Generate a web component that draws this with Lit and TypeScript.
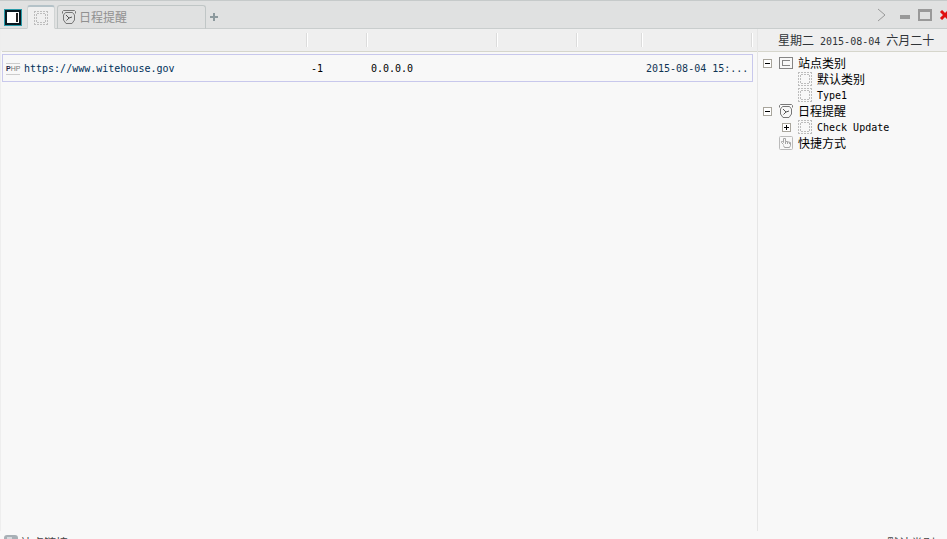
import { LitElement, html, css, svg } from "lit";
import { customElement } from "lit/decorators.js";

const siteIcon = html`<svg class="icon" width="16" height="16" viewBox="0 0 16 16" shape-rendering="crispEdges" fill="none" stroke="#bdbdbd" aria-hidden="true">
  <path d="M1 1.5h14M1 14.5h14M1.5 1v14M14.5 1v14" stroke-dasharray="2 1"/>
  <path d="M4 3.5h8M4 12.5h8M3.5 4v8M12.5 4v8" stroke-dasharray="2 1"/>
</svg>`;

const clockIcon = html`<svg class="icon" width="16" height="16" viewBox="0 0 16 16" fill="none" stroke="#777" aria-hidden="true">
  <path d="M1.5 4.5V2.5L2.5 1.5H13.5L14.5 2.5V4.5M4.5 3.5H11.5L13.5 6V11L11 14.5H5L2.5 11V6Z"/>
  <path d="M5 6L8 9L11 8M8 9L5.5 11.5" stroke="#555"/>
</svg>`;

const categoryIcon = html`<svg class="icon" width="16" height="16" viewBox="0 0 16 16" shape-rendering="crispEdges" fill="none" stroke="#858585" aria-hidden="true">
  <path d="M1.5 2.5h13v11h-13zM12 5.5H4.5v5H12"/>
</svg>`;

const handIcon = html`<svg class="icon" width="16" height="16" viewBox="0 0 16 16" fill="none" stroke="#bbb" aria-hidden="true">
  <rect x="1.5" y="1.5" width="13" height="13" rx="1"/>
  <path d="M5.5 9.5L3.5 7.5V6.5H4.5L5.5 7.5V3.5H7.5V6.5H9.5V7H11.5V7.5H12.5V10.5L11.5 12.5H6.5L5.5 10.5M7.5 6.5V9M9.5 7V9M11.5 7.5V9" stroke="#a5a5a5"/>
</svg>`;

const expander = (open: boolean, label: string) => html`<button class="expander" aria-label=${label} aria-expanded=${open}>
  <svg width="9" height="9" viewBox="0 0 9 9" shape-rendering="crispEdges" fill="none">
    <path d="M.5 .5h8v8h-8z" fill="#fff" stroke="#a8a59c"/>
    <path d="M2 4.5h5" stroke="#000"/>
    ${open ? "" : svg`<path d="M4.5 2v5" stroke="#000"/>`}
  </svg>
</button>`;

@customElement("app-root")
export class AppRoot extends LitElement {
  static styles = css`
    :host {
      display: flex;
      flex-direction: column;
      height: 100vh;
      overflow: hidden;
      background: #f8f8f8;
      color: #000;
      font: 12px/16px "Noto Sans CJK SC", sans-serif;
    }
    * { box-sizing: border-box; }
    button {
      margin: 0;
      padding: 0;
      border: 0;
      background: none;
      color: inherit;
      font: inherit;
    }
    svg { display: block; }
    .icon { flex: none; }
    .latin { font-family: "DejaVu Sans Mono", monospace; font-size: 10px; }
    .titlebar {
      display: flex;
      flex: none;
      align-items: flex-end;
      height: 29px;
      border-top: 1px solid #c6caca;
      background: linear-gradient(#c9cdcd, #c9cdcd) bottom / 100% 1px no-repeat #e0e1e1;
    }
    .logo { margin: 0 5px 3px 4px; }
    .tab {
      display: flex;
      align-items: center;
      height: 24px;
      border: 1px solid #c0c6c6;
      border-bottom-color: #c9cdcd;
      border-radius: 3px 3px 0 0;
      color: #909090;
    }
    .tab.current {
      width: 28px;
      justify-content: center;
      margin-right: 2px;
      border-color: #b4c2c8 #d0d4d4 #efefef;
      border-top-width: 2px;
      background: #efefef;
    }
    .tab.wide {
      gap: 2px;
      width: 149px;
      padding-left: 3px;
    }
    .add { margin: 0 0 7px 4px; }
    .controls {
      display: flex;
      gap: 7px;
      height: 28px;
      align-items: center;
      margin-left: auto;
    }
    .controls button:first-child { margin-right: 6px; }
    .body { display: flex; flex: 1; min-height: 0; }
    .main {
      flex: 1;
      min-width: 0;
      padding-left: 1px;
      border-left: 1px solid #eee;
      background: linear-gradient(#efefef, #efefef) top / 100% 22px no-repeat;
    }
    .sites { width: 100%; border-collapse: separate; border-spacing: 0; table-layout: fixed; }
    .sites th {
      height: 23px;
      padding: 0;
      border-bottom: 1px solid #d6d6cc;
      background: linear-gradient(#dcdcdc, #dcdcdc) right 1px center / 1px 14px no-repeat,
        linear-gradient(#fff, #fff) right center / 1px 14px no-repeat, #efefef;
    }
    .sites th.end { background: #efefef; }
    .address { width: 306px; }
    .rank { width: 60px; }
    .ip { width: 130px; }
    .type { width: 80px; }
    .state { width: 65px; }
    .end { width: 4px; }
    .gap td { height: 2px; padding: 0; }
    .site td {
      height: 28px;
      padding: 2px 3px 0;
      border: 0 solid #c8c8ec;
      border-width: 1px 0;
      white-space: nowrap;
    }
    .site td:first-child { border-left-width: 1px; }
    .site td:nth-child(6) { border-right-width: 1px; }
    .site .time { color: #103454; }
    .site td.end { border: 0; padding: 0; }
    .link { display: flex; align-items: center; gap: 4px; color: #003058; text-decoration: none; }
    .php {
      width: 14px;
      border: solid #ccc;
      border-width: 1px 0;
      color: #777;
      font: 7px/10px "Liberation Sans", sans-serif;
    }
    .php b { color: #224; }
    .side { flex: none; width: 190px; border-left: 1px solid #e6e6e6; }
    .date {
      height: 23px;
      padding: 3px 0 0 20px;
      border-bottom: 1px solid #d6d6cc;
      background: #efefef;
      color: #303438;
      white-space: pre;
    }
    .tree, .tree ul { margin: 0; padding: 0; list-style: none; }
    .tree { padding: 3px 0 0 5px; }
    .tree ul { padding-left: 19px; }
    .node { display: flex; align-items: center; height: 16px; white-space: nowrap; }
    .node .icon { margin-right: 4px; }
    .node .latin { padding-top: 2px; }
    .expander, .spacer { flex: none; width: 9px; margin-right: 6px; }
    .status {
      display: flex;
      flex: none;
      align-items: flex-start;
      height: 8px;
      padding: 4px 0 0 4px;
      overflow: hidden;
      color: #444;
      white-space: nowrap;
    }
    .status .left { display: flex; gap: 2px; margin-right: auto; }
  `;

  render() {
    return html`
      <header class="titlebar">
        <svg class="logo" width="18" height="17" viewBox="0 0 18 17" shape-rendering="crispEdges" aria-hidden="true">
          <path d="M0 0h18v17H0z" fill="#289aa8"/><path d="M1 1h16v15H1z" fill="#081820"/>
          <path d="M3 3h12v11H3z" fill="#fff"/><path d="M12 4h2v9h-2z" fill="#202020"/>
        </svg>
        <button class="tab current" aria-label="站点">${siteIcon}</button>
        <button class="tab wide">${clockIcon}<span>日程提醒</span></button>
        <button class="add" aria-label="新建">
          <svg width="9" height="9" viewBox="0 0 9 9" shape-rendering="crispEdges"><path d="M3 0h2v3h3v2H5v3H3V5H0V3h3z" fill="#8c999d"/></svg>
        </button>
        <div class="controls">
          <button aria-label="更多"><svg width="9" height="14" viewBox="0 0 9 14" fill="none" stroke="#999"><path d="M1 1l7 6-7 6"/></svg></button>
          <button aria-label="最小化"><svg width="12" height="12" viewBox="0 0 12 12"><path d="M1 6h10v4H1z" fill="#999"/></svg></button>
          <button aria-label="最大化"><svg width="14" height="12" viewBox="0 0 14 12" fill="none" stroke="#999"><path d="M1 1h12v10H1zM1 2h12" stroke-width="2"/></svg></button>
          <button aria-label="关闭"><svg width="8" height="10" viewBox="0 0 8 10" fill="none" stroke="#e01010" stroke-width="3"><path d="M2 1l8 8M10 1l-8 8"/></svg></button>
        </div>
      </header>
      <div class="body">
        <main class="main">
          <table class="sites">
            <thead><tr>
              <th class="address"></th><th class="rank"></th><th class="ip"></th><th class="type"></th><th class="state"></th><th></th><th class="end"></th>
            </tr></thead>
            <tbody>
              <tr class="gap"><td colspan="7"></td></tr>
              <tr class="site">
                <td><a class="link" href="https://www.witehouse.gov"><span class="php"><b>P</b>HP</span><span class="latin">https://www.witehouse.gov</span></a></td>
                <td class="latin">-1</td><td class="latin">0.0.0.0</td><td></td><td></td>
                <td class="latin time">2015-08-04 15:...</td><td class="end"></td>
              </tr>
            </tbody>
          </table>
        </main>
        <aside class="side">
          <div class="date">星期二<span class="latin"> 2015-08-04 </span>六月二十</div>
          <ul class="tree">
            <li>
              <div class="node">${expander(true, "站点类别")}${categoryIcon}<span>站点类别</span></div>
              <ul>
                <li class="node"><span class="spacer"></span>${siteIcon}<span>默认类别</span></li>
                <li class="node"><span class="spacer"></span>${siteIcon}<span class="latin">Type1</span></li>
              </ul>
            </li>
            <li>
              <div class="node">${expander(true, "日程提醒")}${clockIcon}<span>日程提醒</span></div>
              <ul>
                <li class="node">${expander(false, "Check Update")}${siteIcon}<span class="latin">Check Update</span></li>
              </ul>
            </li>
            <li class="node"><span class="spacer"></span>${handIcon}<span>快捷方式</span></li>
          </ul>
        </aside>
      </div>
      <footer class="status">
        <span class="left">
          <svg class="icon" width="14" height="14" viewBox="0 0 14 14" aria-hidden="true"><rect width="14" height="14" rx="3" fill="#a8b0b6"/><path d="M3 2h5v9H3z" fill="#d5dade"/></svg>
          <span>站点链接</span>
        </span>
        <span>默认类别<span class="latin">(1</span></span>
      </footer>
    `;
  }
}
